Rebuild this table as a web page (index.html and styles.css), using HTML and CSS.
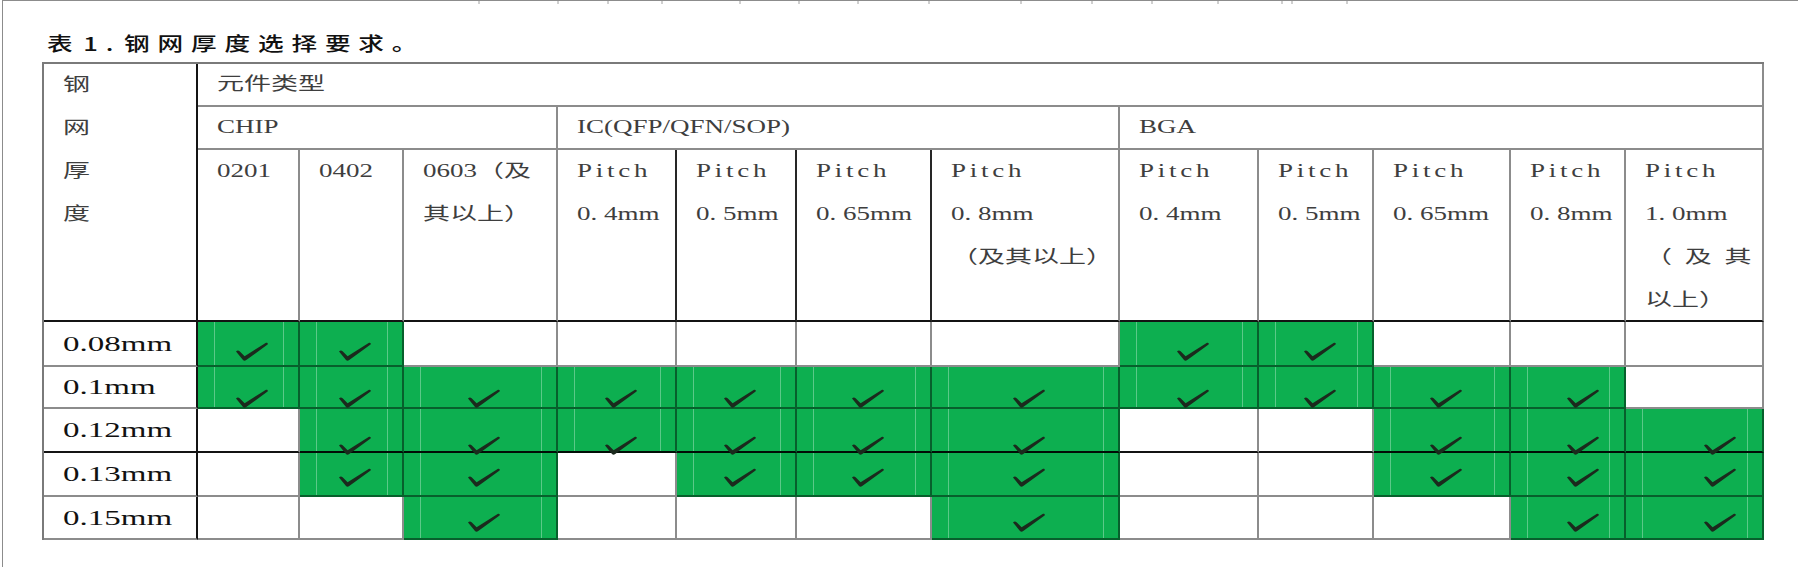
FILE: index.html
```html
<!DOCTYPE html>
<html lang="zh-CN">
<head>
<meta charset="utf-8">
<title>表1 钢网厚度选择要求</title>
<link rel="stylesheet" href="styles.css">
</head>
<body>
<div class="page">
  <svg class="ticks" width="1795" height="4" viewBox="0 0 1795 4"><path d="M476 0V3M555 0V3M605 0V3M659 0V3M737 0V3M796 0V3M855 0V3M926 0V3M1018 0V3M1089 0V3M1149 0V3M1215 0V3M1279 0V3M1289 0V3M1344 0V3"/></svg>
  <div class="title"><span class="s">表 1. 钢网厚度选择要求。</span></div>
  <div class="table">
    <div class="c hd h-label"><div><span class="s">钢</span></div><div><span class="s">网</span></div><div><span class="s">厚</span></div><div><span class="s">度</span></div></div>
    <div class="c hd h-one h-type"><span class="s">元件类型</span></div>
    <div class="c hd h-one h-chip"><span class="s">CHIP</span></div>
    <div class="c hd h-one h-ic"><span class="s">IC(QFP/QFN/SOP)</span></div>
    <div class="c hd h-one h-bga"><span class="s">BGA</span></div>

    <div class="c hd sub"><div><span class="s">0201</span></div></div>
    <div class="c hd sub"><div><span class="s">0402</span></div></div>
    <div class="c hd sub"><div><span class="s">0603（及</span></div><div><span class="s">其以上）</span></div></div>
    <div class="c hd sub blk"><div><span class="s pitch">Pitch</span></div><div><span class="s">0. 4mm</span></div></div>
    <div class="c hd sub blk"><div><span class="s pitch">Pitch</span></div><div><span class="s">0. 5mm</span></div></div>
    <div class="c hd sub blk"><div><span class="s pitch">Pitch</span></div><div><span class="s">0. 65mm</span></div></div>
    <div class="c hd sub"><div><span class="s pitch">Pitch</span></div><div><span class="s">0. 8mm</span></div><div><span class="s">（及其以上）</span></div></div>
    <div class="c hd sub"><div><span class="s pitch">Pitch</span></div><div><span class="s">0. 4mm</span></div></div>
    <div class="c hd sub"><div><span class="s pitch">Pitch</span></div><div><span class="s">0. 5mm</span></div></div>
    <div class="c hd sub"><div><span class="s pitch">Pitch</span></div><div><span class="s">0. 65mm</span></div></div>
    <div class="c hd sub"><div><span class="s pitch">Pitch</span></div><div><span class="s">0. 8mm</span></div></div>
    <div class="c hd sub"><div><span class="s pitch">Pitch</span></div><div><span class="s">1. 0mm</span></div><div><span class="s spread">（及其</span></div><div><span class="s">以上）</span></div></div>

    <div class="row r1">
      <div class="c rl"><span class="s">0.08mm</span></div>
      <div class="c d g"><svg class="ck" viewBox="0 0 34 19"><path d="M1 9.6C2.2 8.4 3.4 8.3 4.6 9.3L9.6 14.2L30.6 1.1C32 .3 33.4 1.4 32.6 2.6L10.9 18.2C9.9 18.9 8.8 18.8 8 18Z"/></svg></div>
      <div class="c d g"><svg class="ck" viewBox="0 0 34 19"><path d="M1 9.6C2.2 8.4 3.4 8.3 4.6 9.3L9.6 14.2L30.6 1.1C32 .3 33.4 1.4 32.6 2.6L10.9 18.2C9.9 18.9 8.8 18.8 8 18Z"/></svg></div>
      <div class="c d"></div>
      <div class="c d"></div>
      <div class="c d"></div>
      <div class="c d"></div>
      <div class="c d"></div>
      <div class="c d g"><svg class="ck" viewBox="0 0 34 19"><path d="M1 9.6C2.2 8.4 3.4 8.3 4.6 9.3L9.6 14.2L30.6 1.1C32 .3 33.4 1.4 32.6 2.6L10.9 18.2C9.9 18.9 8.8 18.8 8 18Z"/></svg></div>
      <div class="c d g"><svg class="ck" viewBox="0 0 34 19"><path d="M1 9.6C2.2 8.4 3.4 8.3 4.6 9.3L9.6 14.2L30.6 1.1C32 .3 33.4 1.4 32.6 2.6L10.9 18.2C9.9 18.9 8.8 18.8 8 18Z"/></svg></div>
      <div class="c d"></div>
      <div class="c d x11"></div>
      <div class="c d x12"></div>
    </div>

    <div class="row r2">
      <div class="c rl"><span class="s">0.1mm</span></div>
      <div class="c d g"><svg class="ck" viewBox="0 0 34 19"><path d="M1 9.6C2.2 8.4 3.4 8.3 4.6 9.3L9.6 14.2L30.6 1.1C32 .3 33.4 1.4 32.6 2.6L10.9 18.2C9.9 18.9 8.8 18.8 8 18Z"/></svg></div>
      <div class="c d g"><svg class="ck" viewBox="0 0 34 19"><path d="M1 9.6C2.2 8.4 3.4 8.3 4.6 9.3L9.6 14.2L30.6 1.1C32 .3 33.4 1.4 32.6 2.6L10.9 18.2C9.9 18.9 8.8 18.8 8 18Z"/></svg></div>
      <div class="c d g"><svg class="ck" viewBox="0 0 34 19"><path d="M1 9.6C2.2 8.4 3.4 8.3 4.6 9.3L9.6 14.2L30.6 1.1C32 .3 33.4 1.4 32.6 2.6L10.9 18.2C9.9 18.9 8.8 18.8 8 18Z"/></svg></div>
      <div class="c d g"><svg class="ck" viewBox="0 0 34 19"><path d="M1 9.6C2.2 8.4 3.4 8.3 4.6 9.3L9.6 14.2L30.6 1.1C32 .3 33.4 1.4 32.6 2.6L10.9 18.2C9.9 18.9 8.8 18.8 8 18Z"/></svg></div>
      <div class="c d g"><svg class="ck" viewBox="0 0 34 19"><path d="M1 9.6C2.2 8.4 3.4 8.3 4.6 9.3L9.6 14.2L30.6 1.1C32 .3 33.4 1.4 32.6 2.6L10.9 18.2C9.9 18.9 8.8 18.8 8 18Z"/></svg></div>
      <div class="c d g"><svg class="ck" viewBox="0 0 34 19"><path d="M1 9.6C2.2 8.4 3.4 8.3 4.6 9.3L9.6 14.2L30.6 1.1C32 .3 33.4 1.4 32.6 2.6L10.9 18.2C9.9 18.9 8.8 18.8 8 18Z"/></svg></div>
      <div class="c d g"><svg class="ck" viewBox="0 0 34 19"><path d="M1 9.6C2.2 8.4 3.4 8.3 4.6 9.3L9.6 14.2L30.6 1.1C32 .3 33.4 1.4 32.6 2.6L10.9 18.2C9.9 18.9 8.8 18.8 8 18Z"/></svg></div>
      <div class="c d g"><svg class="ck" viewBox="0 0 34 19"><path d="M1 9.6C2.2 8.4 3.4 8.3 4.6 9.3L9.6 14.2L30.6 1.1C32 .3 33.4 1.4 32.6 2.6L10.9 18.2C9.9 18.9 8.8 18.8 8 18Z"/></svg></div>
      <div class="c d g"><svg class="ck" viewBox="0 0 34 19"><path d="M1 9.6C2.2 8.4 3.4 8.3 4.6 9.3L9.6 14.2L30.6 1.1C32 .3 33.4 1.4 32.6 2.6L10.9 18.2C9.9 18.9 8.8 18.8 8 18Z"/></svg></div>
      <div class="c d g"><svg class="ck" viewBox="0 0 34 19"><path d="M1 9.6C2.2 8.4 3.4 8.3 4.6 9.3L9.6 14.2L30.6 1.1C32 .3 33.4 1.4 32.6 2.6L10.9 18.2C9.9 18.9 8.8 18.8 8 18Z"/></svg></div>
      <div class="c d g x11"><svg class="ck" viewBox="0 0 34 19"><path d="M1 9.6C2.2 8.4 3.4 8.3 4.6 9.3L9.6 14.2L30.6 1.1C32 .3 33.4 1.4 32.6 2.6L10.9 18.2C9.9 18.9 8.8 18.8 8 18Z"/></svg></div>
      <div class="c d x12"></div>
    </div>

    <div class="row r3">
      <div class="c rl"><span class="s">0.12mm</span></div>
      <div class="c d"></div>
      <div class="c d g"><svg class="ck" viewBox="0 0 34 19"><path d="M1 9.6C2.2 8.4 3.4 8.3 4.6 9.3L9.6 14.2L30.6 1.1C32 .3 33.4 1.4 32.6 2.6L10.9 18.2C9.9 18.9 8.8 18.8 8 18Z"/></svg></div>
      <div class="c d g"><svg class="ck" viewBox="0 0 34 19"><path d="M1 9.6C2.2 8.4 3.4 8.3 4.6 9.3L9.6 14.2L30.6 1.1C32 .3 33.4 1.4 32.6 2.6L10.9 18.2C9.9 18.9 8.8 18.8 8 18Z"/></svg></div>
      <div class="c d g"><svg class="ck" viewBox="0 0 34 19"><path d="M1 9.6C2.2 8.4 3.4 8.3 4.6 9.3L9.6 14.2L30.6 1.1C32 .3 33.4 1.4 32.6 2.6L10.9 18.2C9.9 18.9 8.8 18.8 8 18Z"/></svg></div>
      <div class="c d g"><svg class="ck" viewBox="0 0 34 19"><path d="M1 9.6C2.2 8.4 3.4 8.3 4.6 9.3L9.6 14.2L30.6 1.1C32 .3 33.4 1.4 32.6 2.6L10.9 18.2C9.9 18.9 8.8 18.8 8 18Z"/></svg></div>
      <div class="c d g"><svg class="ck" viewBox="0 0 34 19"><path d="M1 9.6C2.2 8.4 3.4 8.3 4.6 9.3L9.6 14.2L30.6 1.1C32 .3 33.4 1.4 32.6 2.6L10.9 18.2C9.9 18.9 8.8 18.8 8 18Z"/></svg></div>
      <div class="c d g"><svg class="ck" viewBox="0 0 34 19"><path d="M1 9.6C2.2 8.4 3.4 8.3 4.6 9.3L9.6 14.2L30.6 1.1C32 .3 33.4 1.4 32.6 2.6L10.9 18.2C9.9 18.9 8.8 18.8 8 18Z"/></svg></div>
      <div class="c d"></div>
      <div class="c d"></div>
      <div class="c d g"><svg class="ck" viewBox="0 0 34 19"><path d="M1 9.6C2.2 8.4 3.4 8.3 4.6 9.3L9.6 14.2L30.6 1.1C32 .3 33.4 1.4 32.6 2.6L10.9 18.2C9.9 18.9 8.8 18.8 8 18Z"/></svg></div>
      <div class="c d g x11"><svg class="ck" viewBox="0 0 34 19"><path d="M1 9.6C2.2 8.4 3.4 8.3 4.6 9.3L9.6 14.2L30.6 1.1C32 .3 33.4 1.4 32.6 2.6L10.9 18.2C9.9 18.9 8.8 18.8 8 18Z"/></svg></div>
      <div class="c d g x12"><svg class="ck" viewBox="0 0 34 19"><path d="M1 9.6C2.2 8.4 3.4 8.3 4.6 9.3L9.6 14.2L30.6 1.1C32 .3 33.4 1.4 32.6 2.6L10.9 18.2C9.9 18.9 8.8 18.8 8 18Z"/></svg></div>
    </div>

    <div class="row r4">
      <div class="c rl"><span class="s">0.13mm</span></div>
      <div class="c d"></div>
      <div class="c d g"><svg class="ck" viewBox="0 0 34 19"><path d="M1 9.6C2.2 8.4 3.4 8.3 4.6 9.3L9.6 14.2L30.6 1.1C32 .3 33.4 1.4 32.6 2.6L10.9 18.2C9.9 18.9 8.8 18.8 8 18Z"/></svg></div>
      <div class="c d g"><svg class="ck" viewBox="0 0 34 19"><path d="M1 9.6C2.2 8.4 3.4 8.3 4.6 9.3L9.6 14.2L30.6 1.1C32 .3 33.4 1.4 32.6 2.6L10.9 18.2C9.9 18.9 8.8 18.8 8 18Z"/></svg></div>
      <div class="c d"></div>
      <div class="c d g"><svg class="ck" viewBox="0 0 34 19"><path d="M1 9.6C2.2 8.4 3.4 8.3 4.6 9.3L9.6 14.2L30.6 1.1C32 .3 33.4 1.4 32.6 2.6L10.9 18.2C9.9 18.9 8.8 18.8 8 18Z"/></svg></div>
      <div class="c d g"><svg class="ck" viewBox="0 0 34 19"><path d="M1 9.6C2.2 8.4 3.4 8.3 4.6 9.3L9.6 14.2L30.6 1.1C32 .3 33.4 1.4 32.6 2.6L10.9 18.2C9.9 18.9 8.8 18.8 8 18Z"/></svg></div>
      <div class="c d g"><svg class="ck" viewBox="0 0 34 19"><path d="M1 9.6C2.2 8.4 3.4 8.3 4.6 9.3L9.6 14.2L30.6 1.1C32 .3 33.4 1.4 32.6 2.6L10.9 18.2C9.9 18.9 8.8 18.8 8 18Z"/></svg></div>
      <div class="c d"></div>
      <div class="c d"></div>
      <div class="c d g"><svg class="ck" viewBox="0 0 34 19"><path d="M1 9.6C2.2 8.4 3.4 8.3 4.6 9.3L9.6 14.2L30.6 1.1C32 .3 33.4 1.4 32.6 2.6L10.9 18.2C9.9 18.9 8.8 18.8 8 18Z"/></svg></div>
      <div class="c d g x11"><svg class="ck" viewBox="0 0 34 19"><path d="M1 9.6C2.2 8.4 3.4 8.3 4.6 9.3L9.6 14.2L30.6 1.1C32 .3 33.4 1.4 32.6 2.6L10.9 18.2C9.9 18.9 8.8 18.8 8 18Z"/></svg></div>
      <div class="c d g x12"><svg class="ck" viewBox="0 0 34 19"><path d="M1 9.6C2.2 8.4 3.4 8.3 4.6 9.3L9.6 14.2L30.6 1.1C32 .3 33.4 1.4 32.6 2.6L10.9 18.2C9.9 18.9 8.8 18.8 8 18Z"/></svg></div>
    </div>

    <div class="row r5">
      <div class="c rl"><span class="s">0.15mm</span></div>
      <div class="c d"></div>
      <div class="c d"></div>
      <div class="c d g"><svg class="ck" viewBox="0 0 34 19"><path d="M1 9.6C2.2 8.4 3.4 8.3 4.6 9.3L9.6 14.2L30.6 1.1C32 .3 33.4 1.4 32.6 2.6L10.9 18.2C9.9 18.9 8.8 18.8 8 18Z"/></svg></div>
      <div class="c d"></div>
      <div class="c d"></div>
      <div class="c d"></div>
      <div class="c d g"><svg class="ck" viewBox="0 0 34 19"><path d="M1 9.6C2.2 8.4 3.4 8.3 4.6 9.3L9.6 14.2L30.6 1.1C32 .3 33.4 1.4 32.6 2.6L10.9 18.2C9.9 18.9 8.8 18.8 8 18Z"/></svg></div>
      <div class="c d"></div>
      <div class="c d"></div>
      <div class="c d"></div>
      <div class="c d g x11"><svg class="ck" viewBox="0 0 34 19"><path d="M1 9.6C2.2 8.4 3.4 8.3 4.6 9.3L9.6 14.2L30.6 1.1C32 .3 33.4 1.4 32.6 2.6L10.9 18.2C9.9 18.9 8.8 18.8 8 18Z"/></svg></div>
      <div class="c d g x12"><svg class="ck" viewBox="0 0 34 19"><path d="M1 9.6C2.2 8.4 3.4 8.3 4.6 9.3L9.6 14.2L30.6 1.1C32 .3 33.4 1.4 32.6 2.6L10.9 18.2C9.9 18.9 8.8 18.8 8 18Z"/></svg></div>
    </div>
  </div>
</div>
</body>
</html>
```

FILE: styles.css
```css
* { box-sizing: border-box; }

html, body {
  margin: 0;
  background: #ffffff;
}

body {
  width: 1798px;
  height: 567px;
  overflow: hidden;
  font-family: "Liberation Serif", "Noto Sans CJK SC", serif;
}

.page {
  margin-left: 2px;
  height: 567px;
  border-left: 1px solid #8c8c8c;
  border-top: 1px solid #8c8c8c;
}

.ticks {
  display: block;
  width: 1795px;
  height: 4px;
}

.ticks path {
  stroke: #a0a0a0;
  stroke-width: 1;
}

/* horizontally stretched text, like the source image */
.s {
  display: inline-block;
  white-space: nowrap;
  transform: scaleX(1.5);
  transform-origin: 0 50%;
}

.title {
  height: 57px;
  padding: 25px 0 0 44px;
  line-height: 26px;
  font-family: "Noto Sans CJK SC", sans-serif;
  font-size: 19px;
  font-weight: 500;
  color: #111111;
}

.title .s {
  transform: scaleX(1.35);
  letter-spacing: 5.8px;
  word-spacing: -8px;
}

.table {
  margin-left: 39px;
  width: 1722px;
  display: grid;
  grid-template-columns: 154px 102px 104px 154px 119px 120px 135px 188px 139px 115px 137px 115px 138px;
  grid-template-rows: 43px 43px 172px 45px 42px 44px 44px 43px;
  border-left: 2px solid #7a7a7a;
  border-top: 2px solid #7a7a7a;
}

.row { display: contents; }

.c {
  border-right: 2px solid rgba(0, 0, 0, 0.45);
  border-bottom: 2px solid rgba(0, 0, 0, 0.45);
  min-width: 0;
}

/* header */
.hd {
  padding-left: 19px;
  font-size: 18px;
  line-height: 43px;
  color: #3e3e3e;
}

.h-label {
  grid-column: 1;
  grid-row: 1 / span 3;
  border-right-color: rgba(0, 0, 0, 0.92);
  border-bottom-color: rgba(0, 0, 0, 0.92);
}

.h-one { line-height: 41px; }

.h-type { grid-column: 2 / span 12; grid-row: 1; }
.h-chip { grid-column: 2 / span 3; grid-row: 2; }
.h-ic   { grid-column: 5 / span 4; grid-row: 2; }
.h-bga  { grid-column: 9 / span 5; grid-row: 2; }

.sub {
  grid-row: 3;
  border-bottom-color: rgba(0, 0, 0, 0.92);
}

.sub.blk { border-right-color: rgba(0, 0, 0, 0.85); }

.pitch { letter-spacing: 2.5px; }
.spread { letter-spacing: 8.5px; }

/* data rows */
.rl {
  display: flex;
  align-items: center;
  padding-left: 19px;
  font-size: 22px;
  color: #111111;
  border-right-color: rgba(0, 0, 0, 0.92);
}

.d {
  display: flex;
  justify-content: center;
  align-items: flex-end;
  padding-left: 8px;
}

.d.x11 { padding-left: 30px; }
.d.x12 { padding-left: 52px; }

.g {
  background-color: #0daf50;
  background-image: linear-gradient(to right,
    transparent 16px,
    rgba(255, 255, 255, 0.32) 16px,
    rgba(255, 255, 255, 0.32) 17px,
    transparent 17px,
    transparent calc(100% - 15px),
    rgba(255, 255, 255, 0.32) calc(100% - 15px),
    rgba(255, 255, 255, 0.32) calc(100% - 14px),
    transparent calc(100% - 14px));
  background-repeat: no-repeat;
}

.ck {
  display: block;
  width: 34px;
  height: 19px;
  position: relative;
  z-index: 1;
}

.ck path { fill: #1b2a1d; }

.r1 .d { padding-bottom: 4px; }
.r2 .d .ck { margin-bottom: -1px; }
.r3 .c { border-bottom-color: rgba(0, 0, 0, 0.92); }
.r3 .d .ck { margin-bottom: -4px; }
.r4 .d { padding-bottom: 8px; }
.r5 .d { padding-bottom: 6px; }
```
